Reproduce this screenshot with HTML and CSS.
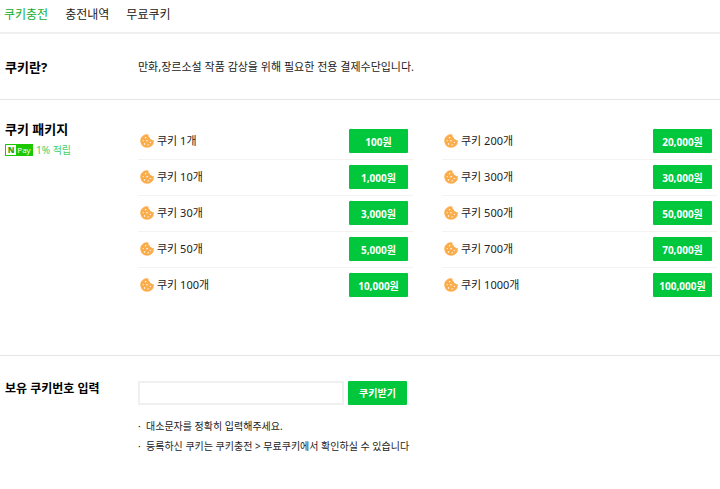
FILE: index.html
```html
<!DOCTYPE html>
<html lang="ko">
<head>
    <meta charset="UTF-8">
    <meta name="viewport" content="width=device-width, initial-scale=1.0">
    <title>쿠키충전</title>
    <link rel="stylesheet" href="styles.css">
</head>
<body>
    <svg class="sprite" aria-hidden="true">
        <symbol id="cookie" viewBox="0 0 14 14">
            <path fill="#fbad4b" d="M8.6 0.4A6.8 6.8 0 1 0 13.8 6.1C13 6.5 12.2 6.2 11.9 5.4C10.7 5.7 9.8 4.9 10 3.8C8.6 3.4 8 1.8 8.6 0.4Z"/>
            <g fill="#fff">
                <circle cx="5.6" cy="3.8" r="0.7"/>
                <circle cx="3.3" cy="6.6" r="0.6"/>
                <circle cx="7" cy="6.8" r="0.8"/>
                <circle cx="4.6" cy="10" r="0.7"/>
                <circle cx="10.3" cy="8.4" r="0.6"/>
                <circle cx="8.2" cy="10.9" r="0.7"/>
            </g>
        </symbol>
    </svg>

    <nav class="tabs">
        <a href="#charge" class="active">쿠키충전</a>
        <a href="#history">충전내역</a>
        <a href="#free">무료쿠키</a>
    </nav>

    <main>
        <section class="section about">
            <h2>쿠키란?</h2>
            <p class="desc">만화,장르소설 작품 감상을 위해 필요한 전용 결제수단입니다.</p>
        </section>

        <section class="section packages" id="charge">
            <div>
                <h2>쿠키 패키지</h2>
                <p class="pay"><span class="npay"><b>N</b><span>Pay</span></span>1% 적립</p>
            </div>
            <div class="lists">
                <ul class="list">
                    <li><svg class="cookie"><use href="#cookie"/></svg><span>쿠키 1개</span><button type="button">100원</button></li>
                    <li><svg class="cookie"><use href="#cookie"/></svg><span>쿠키 10개</span><button type="button">1,000원</button></li>
                    <li><svg class="cookie"><use href="#cookie"/></svg><span>쿠키 30개</span><button type="button">3,000원</button></li>
                    <li><svg class="cookie"><use href="#cookie"/></svg><span>쿠키 50개</span><button type="button">5,000원</button></li>
                    <li><svg class="cookie"><use href="#cookie"/></svg><span>쿠키 100개</span><button type="button">10,000원</button></li>
                </ul>
                <ul class="list">
                    <li><svg class="cookie"><use href="#cookie"/></svg><span>쿠키 200개</span><button type="button">20,000원</button></li>
                    <li><svg class="cookie"><use href="#cookie"/></svg><span>쿠키 300개</span><button type="button">30,000원</button></li>
                    <li><svg class="cookie"><use href="#cookie"/></svg><span>쿠키 500개</span><button type="button">50,000원</button></li>
                    <li><svg class="cookie"><use href="#cookie"/></svg><span>쿠키 700개</span><button type="button">70,000원</button></li>
                    <li><svg class="cookie"><use href="#cookie"/></svg><span>쿠키 1000개</span><button type="button">100,000원</button></li>
                </ul>
            </div>
        </section>

        <section class="section coupon">
            <h2><label for="code">보유 쿠키번호 입력</label></h2>
            <div>
                <form class="code-form">
                    <input type="text" id="code">
                    <button type="button">쿠키받기</button>
                </form>
                <ul class="notes">
                    <li>대소문자를 정확히 입력해주세요.</li>
                    <li>등록하신 쿠키는 쿠키충전 &gt; 무료쿠키에서 확인하실 수 있습니다</li>
                </ul>
            </div>
        </section>
    </main>
</body>
</html>
```
FILE: styles.css
```css
:root {
    --green: #00c73c;
    --line: #e6e6e6;
    --text: #222;
}

* {
    margin: 0;
    padding: 0;
    box-sizing: border-box;
}

body {
    background: #fff;
    color: var(--text);
    font-family: "Noto Sans", "Noto Sans CJK KR", sans-serif;
    font-size: 11px;
    line-height: 20px;
}

ul {
    list-style: none;
}

.sprite {
    display: none;
}

.tabs {
    display: flex;
    gap: 17px;
    padding: 5px 4px 7px;
    border-bottom: 2px solid #f0f0f0;
    font-size: 12px;
}

.tabs a {
    color: var(--text);
    text-decoration: none;
}

.tabs .active {
    color: #12ae2c;
}

.section {
    display: grid;
    grid-template-columns: 133px 1fr;
    padding-left: 5px;
}

.section + .section {
    border-top: 1px solid var(--line);
}

h2 {
    color: #000;
    font-size: 13px;
    font-weight: 700;
}

.about {
    padding-top: 23px;
    padding-bottom: 22px;
}

.packages {
    padding-top: 19px;
    padding-right: 3px;
    padding-bottom: 51px;
}

.pay {
    display: flex;
    align-items: center;
    gap: 3px;
    padding-top: 1px;
    color: #3fcf68;
    font-size: 10px;
}

.npay {
    display: flex;
    width: 28px;
    height: 12px;
    border: 1px solid #1ec800;
    background: #1ec800;
    color: #fff;
    font-family: "Open Sans", sans-serif;
    font-size: 8px;
    line-height: 10px;
}

.npay b {
    width: 10px;
    background: #fff;
    color: #1ea81e;
    font-weight: 800;
    text-align: center;
}

.npay span {
    flex: 1;
    text-align: center;
}

.lists {
    display: grid;
    grid-template-columns: 1fr 1fr;
    gap: 29px;
    padding-top: 5px;
}

.list li {
    display: flex;
    align-items: center;
    height: 36px;
    padding: 0 5px 1px 2px;
    border-bottom: 1px solid #f3f3f3;
}

.list li:last-child {
    border-bottom-color: transparent;
}

.cookie {
    width: 14px;
    height: 14px;
    margin-right: 3px;
}

button {
    width: 59px;
    height: 24px;
    border: none;
    border-radius: 1px;
    background: var(--green);
    color: #fff;
    font-family: inherit;
    font-size: 10px;
    font-weight: 700;
    cursor: pointer;
}

.list button {
    margin-left: auto;
}

.coupon {
    padding-top: 25px;
    padding-bottom: 30px;
}

.coupon h2 {
    font-size: 12px;
    line-height: 16px;
}

.code-form {
    display: flex;
    gap: 4px;
}

.code-form button {
    padding-bottom: 2px;
}

.code-form input {
    width: 206px;
    height: 24px;
    padding: 0 6px;
    border: 2px solid #f0f0f0;
    font: inherit;
}

.notes {
    padding-top: 11px;
    font-size: 10px;
}

.notes li::before {
    content: "·";
    display: inline-block;
    width: 8px;
}
```
